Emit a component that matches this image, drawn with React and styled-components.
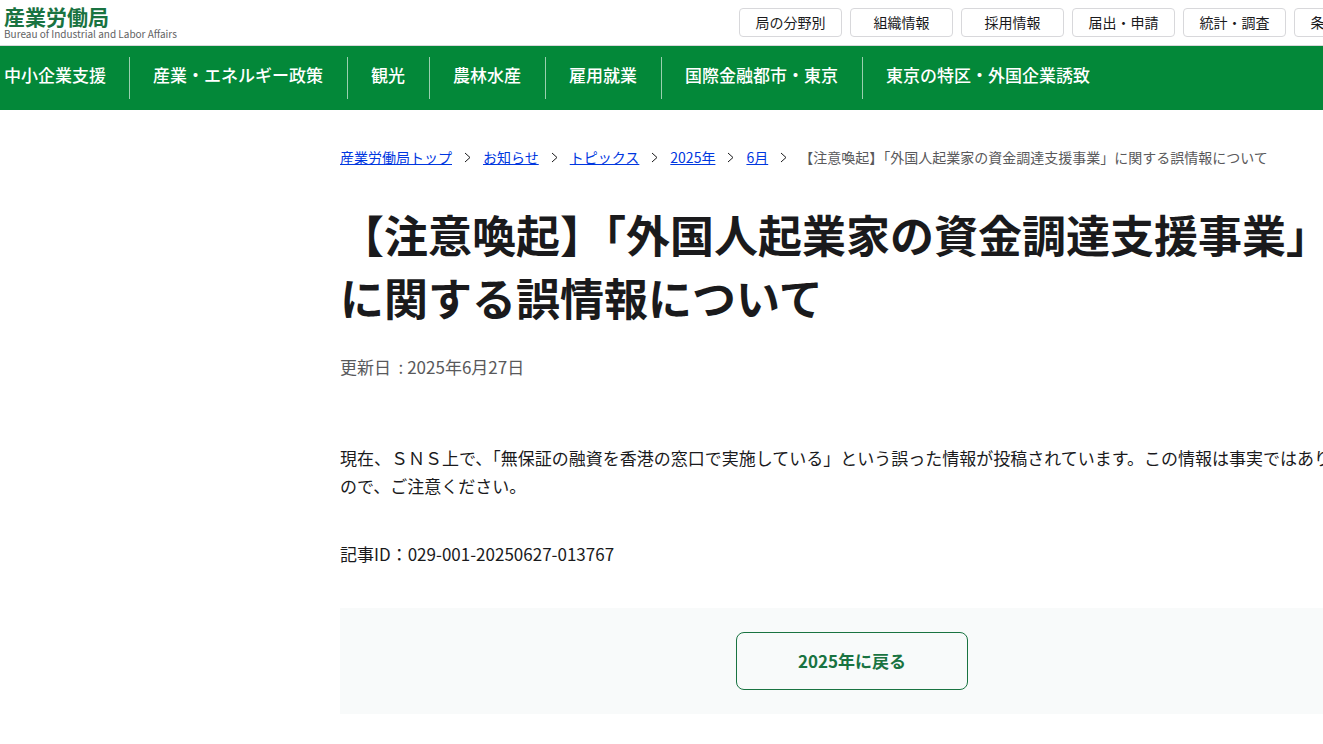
import React from 'react'
import styled, { createGlobalStyle } from 'styled-components'

const GlobalStyle = createGlobalStyle`
    * {
        box-sizing: border-box;
    }
    body {
        margin: 0;
        overflow-x: hidden;
        background: #fff;
        color: #1a1a1c;
        font-family: "Noto Sans CJK JP", sans-serif;
        font-size: 17px;
        line-height: 28px;
    }
`;

const Page = styled.div`
    min-width: 1400px;
`;

const Header = styled.header`
    display: flex;
    justify-content: space-between;
    align-items: center;
    height: 46px;
    padding: 0 3px 0 4px;
    border-bottom: 1px solid #d8d8db;
`;

const Brand = styled.a`
    display: flex;
    flex-direction: column;
    color: #197341;
    font-size: 21px;
    font-weight: 700;
    line-height: 22px;
    text-decoration: none;
`;

const BrandSub = styled.span`
    color: #626264;
    font-size: 10px;
    font-weight: 400;
    line-height: 14px;
`;

const TabList = styled.ul`
    display: flex;
    gap: 8px;
    margin: 0;
    padding: 0;
    list-style: none;
`;

const Tab = styled.a`
    display: block;
    width: 103px;
    border: 1px solid #d8d8db;
    border-radius: 4px;
    color: #1a1a1c;
    font-size: 14px;
    line-height: 27px;
    text-align: center;
    text-decoration: none;
`;

const GlobalNav = styled.nav`
    padding: 11px 0;
    background: #038839;
`;

const NavList = styled.ul`
    display: flex;
    margin: 0;
    padding: 0;
    list-style: none;
`;

const NavItem = styled.li`
    padding: 4px 24px 10px 23px;
    border-right: 1px solid rgba(255, 255, 255, 0.6);
    &:first-child {
        padding: 4px 23px 10px 4px;
    }
    &:last-child {
        border-right: 0;
    }
`;

const NavLink = styled.a`
    color: #fff;
    font-weight: 500;
    text-decoration: none;
`;

const Main = styled.main`
    padding: 35px 8px 30px 340px;
`;

const Breadcrumb = styled.ol`
    display: flex;
    align-items: center;
    margin: 0;
    padding: 0;
    list-style: none;
    color: #59595b;
    font-size: 14px;
    line-height: 24px;
`;

const Crumb = styled.li`
    display: flex;
    align-items: center;
`;

const CrumbLink = styled.a`
    color: #0037e0;
`;

const Arrow = styled.svg`
    width: 7px;
    height: 11px;
    margin: 0 12px;
    fill: none;
    stroke: #1a1a1c;
`;

const Title = styled.h1`
    max-width: 1024px;
    margin: 34px 0 0;
    font-size: 44px;
    font-weight: 700;
    line-height: 63px;
`;

const Updated = styled.p`
    margin: 24px 0 0;
    color: #59595b;
`;

const Text = styled.p`
    margin: 63px 0 0;
`;

const ArticleId = styled.p`
    margin: 40px 0 0;
`;

const BackArea = styled.div`
    display: flex;
    justify-content: center;
    max-width: 1024px;
    margin-top: 40px;
    padding: 24px;
    background: #f8fafa;
`;

const BackLink = styled.a`
    width: 232px;
    padding: 14px;
    border: 1px solid #197341;
    border-radius: 8px;
    color: #197341;
    font-weight: 700;
    text-align: center;
    text-decoration: none;
`;

const tabs = ['局の分野別', '組織情報', '採用情報', '届出・申請', '統計・調査', '条例・計画'];

const navItems = [
    '中小企業支援',
    '産業・エネルギー政策',
    '観光',
    '農林水産',
    '雇用就業',
    '国際金融都市・東京',
    '東京の特区・外国企業誘致'
];

const crumbs = ['産業労働局トップ', 'お知らせ', 'トピックス', '2025年', '6月'];

const title = '【注意喚起】「外国人起業家の資金調達支援事業」に関する誤情報について';

function App() {
    return (
        <Page lang="ja">
            <GlobalStyle />
            <Header>
                <Brand href="#">
                    産業労働局
                    <BrandSub>Bureau of Industrial and Labor Affairs</BrandSub>
                </Brand>
                <TabList>
                    {tabs.map(tab => (
                        <li key={tab}><Tab href="#">{tab}</Tab></li>
                    ))}
                </TabList>
            </Header>
            <GlobalNav>
                <NavList>
                    {navItems.map(item => (
                        <NavItem key={item}><NavLink href="#">{item}</NavLink></NavItem>
                    ))}
                </NavList>
            </GlobalNav>
            <Main>
                <nav>
                    <Breadcrumb>
                        {crumbs.map(crumb => (
                            <Crumb key={crumb}>
                                <CrumbLink href="#">{crumb}</CrumbLink>
                                <Arrow viewBox="0 0 7 11" aria-hidden="true">
                                    <path d="M1 1L6 5.5L1 10" />
                                </Arrow>
                            </Crumb>
                        ))}
                        <li>{title}</li>
                    </Breadcrumb>
                </nav>
                <Title>{title}</Title>
                <Updated>更新日&nbsp; : 2025年6月27日</Updated>
                <Text>
                    現在、ＳＮＳ上で、「無保証の融資を香港の窓口で実施している」という誤った情報が投稿されています。この情報は事実ではありませんので、ご注意ください。
                </Text>
                <ArticleId>記事ID：029-001-20250627-013767</ArticleId>
                <BackArea>
                    <BackLink href="#">2025年に戻る</BackLink>
                </BackArea>
            </Main>
        </Page>
    )
}

export default App
